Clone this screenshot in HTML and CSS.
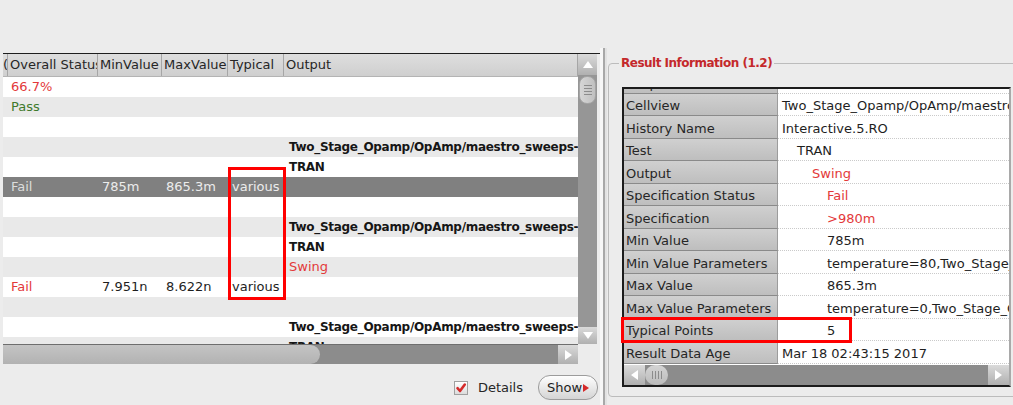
FILE: index.html
```html
<!DOCTYPE html>
<html>
<head>
<meta charset="utf-8">
<link rel="stylesheet" href="styles.css">
</head>
<body>
<div class="app">
  <div class="left">
    <div class="grid">
      <div class="viewport">
        <div class="hdr">
          <div class="c0">(</div>
          <div>Overall Status</div>
          <div>MinValue</div>
          <div>MaxValue</div>
          <div>Typical</div>
          <div>Output</div>
        </div>
        <div class="row w"><div></div><div class="red">66.7%</div><div></div><div></div><div></div><div></div></div>
        <div class="row g"><div></div><div class="green">Pass</div><div></div><div></div><div></div><div></div></div>
        <div class="row w"><div></div><div></div><div></div><div></div><div></div><div></div></div>
        <div class="row g"><div></div><div></div><div></div><div></div><div></div><div class="b">Two_Stage_Opamp/OpAmp/maestro_sweeps-</div></div>
        <div class="row w"><div></div><div></div><div></div><div></div><div></div><div class="b">TRAN</div></div>
        <div class="row sel"><div></div><div class="dim">Fail</div><div>785m</div><div>865.3m</div><div>various</div><div></div></div>
        <div class="row w"><div></div><div></div><div></div><div></div><div></div><div></div></div>
        <div class="row g"><div></div><div></div><div></div><div></div><div></div><div class="b">Two_Stage_Opamp/OpAmp/maestro_sweeps-</div></div>
        <div class="row w"><div></div><div></div><div></div><div></div><div></div><div class="b">TRAN</div></div>
        <div class="row g"><div></div><div></div><div></div><div></div><div></div><div class="red">Swing</div></div>
        <div class="row w"><div></div><div class="red">Fail</div><div>7.951n</div><div>8.622n</div><div>various</div><div></div></div>
        <div class="row g"><div></div><div></div><div></div><div></div><div></div><div></div></div>
        <div class="row w"><div></div><div></div><div></div><div></div><div></div><div class="b">Two_Stage_Opamp/OpAmp/maestro_sweeps-</div></div>
        <div class="row g"><div></div><div></div><div></div><div></div><div></div><div class="b">TRAN</div></div>
      </div>
      <div class="vscroll">
        <div class="sbtn vbtn-up"><svg width="10" height="7" viewBox="0 0 10 7"><polygon points="5,0 10,7 0,7" fill="#ffffff"/></svg></div>
        <div class="vthumb"><span></span><span></span><span></span><span></span></div>
        <div class="vtrack"></div>
        <div class="sbtn vbtn-down"><svg width="10" height="7" viewBox="0 0 10 7"><polygon points="0,0 10,0 5,7" fill="#ffffff"/></svg></div>
      </div>
      <div class="hscroll">
        <div class="hthumb"></div>
        <div class="htrack"></div>
        <div class="sbtn hbtn"><svg width="7" height="10" viewBox="0 0 7 10"><polygon points="0,0 7,5 0,10" fill="#ffffff"/></svg></div>
      </div>
      <div class="corner"></div>
    </div>
    <div class="footer">
      <span class="chk"><svg width="12" height="12" viewBox="0 0 12 12"><path d="M2.5 6.2 L5 9 L9.8 2.5" fill="none" stroke="#d42a2a" stroke-width="2.6" stroke-linecap="round" stroke-linejoin="round"/></svg></span>
      <span class="chk-label">Details</span>
      <button class="show">Show<span class="tri"></span></button>
    </div>
  </div>
  <div class="splitter"></div>
  <div class="right">
    <fieldset class="group">
      <legend>Result Information (1.2)</legend>
      <div class="info">
        <div class="info-view">
          <div class="info-rows">
            <div class="irow"><div class="lbl">Outputs Normal</div><div class="val i0"></div></div>
            <div class="irow"><div class="lbl">Cellview</div><div class="val i0">Two_Stage_Opamp/OpAmp/maestro_sweeps</div></div>
            <div class="irow"><div class="lbl">History Name</div><div class="val i0">Interactive.5.RO</div></div>
            <div class="irow"><div class="lbl">Test</div><div class="val i1">TRAN</div></div>
            <div class="irow"><div class="lbl">Output</div><div class="val i2 red">Swing</div></div>
            <div class="irow"><div class="lbl">Specification Status</div><div class="val i3 red">Fail</div></div>
            <div class="irow"><div class="lbl">Specification</div><div class="val i3 red">&gt;980m</div></div>
            <div class="irow"><div class="lbl">Min Value</div><div class="val i3">785m</div></div>
            <div class="irow"><div class="lbl">Min Value Parameters</div><div class="val i3">temperature=80,Two_Stage_Opamp</div></div>
            <div class="irow"><div class="lbl">Max Value</div><div class="val i3">865.3m</div></div>
            <div class="irow"><div class="lbl">Max Value Parameters</div><div class="val i3">temperature=0,Two_Stage_Opamp</div></div>
            <div class="irow"><div class="lbl">Typical Points</div><div class="val i3">5</div></div>
            <div class="irow"><div class="lbl">Result Data Age</div><div class="val i0">Mar 18 02:43:15 2017</div></div>
          </div>
        </div>
        <div class="hscroll2">
          <div class="sbtn hbtn2"><svg width="7" height="10" viewBox="0 0 7 10"><polygon points="7,0 0,5 7,10" fill="#ffffff"/></svg></div>
          <div class="hthumb2"><span></span><span></span><span></span><span></span></div>
          <div class="htrack2"></div>
          <div class="sbtn hbtn2"><svg width="7" height="10" viewBox="0 0 7 10"><polygon points="0,0 7,5 0,10" fill="#ffffff"/></svg></div>
        </div>
      </div>
    </fieldset>
  </div>
</div>
<div class="mark mark-typ"></div>
<div class="mark mark-pts"></div>
</body>
</html>
```

FILE: styles.css
```css
html, body {
  margin: 0;
  padding: 0;
}
body {
  width: 1013px;
  height: 405px;
  overflow: hidden;
  position: relative;
  background: #ececec;
  font-family: "DejaVu Sans", "Noto Sans", sans-serif;
  font-size: 13px;
  color: #1e1e1e;
}
.app {
  display: flex;
  padding-top: 48px;
  height: 357px;
}

/* ---------- left pane ---------- */
.left {
  width: 597px;
  padding: 5px 0 0 3px;
  display: flex;
  flex-direction: column;
}
.grid {
  display: grid;
  grid-template-columns: 575px 19px;
  grid-template-rows: 290px 20px;
  border-top: 1px solid #1e1e1e;
}
.viewport {
  overflow: hidden;
  background: #ffffff;
}
.hdr, .row {
  display: grid;
  grid-template-columns: 5px 90px 64px 66px 56px 1fr;
}
.hdr {
  height: 22px;
  background: linear-gradient(#dedede, #cfcfcf);
  border-bottom: 1px solid #b4b4b4;
}
.hdr > div {
  line-height: 22px;
  padding-left: 2px;
  white-space: nowrap;
  overflow: hidden;
  border-right: 1px solid #a6a6a6;
  color: #262626;
}
.hdr > .c0 {
  padding-left: 0;
}
.row {
  height: 20px;
}
.row > div {
  line-height: 20px;
  padding-left: 4px;
  white-space: nowrap;
  overflow: hidden;
}
.row > div:first-child {
  padding-left: 0;
}
.row > div:nth-child(2) {
  padding-left: 3px;
}
.row > div:last-child {
  padding-left: 5px;
}
.w { background: #ffffff; }
.g { background: #e9e9e9; }
.sel { background: #808080; color: #ececec; }
.sel .dim { color: #dcdcdc; }
.red { color: #e3393a; }
.green { color: #3f7a2c; }
.b {
  font-weight: bold;
  font-size: 12px;
  letter-spacing: -0.3px;
  color: #161616;
}

.sbtn {
  display: flex;
  align-items: center;
  justify-content: center;
  background: linear-gradient(#dadada, #b0b0b0);
}
.vscroll {
  display: flex;
  flex-direction: column;
  background: #969696;
}
.vbtn-up { height: 21px; }
.vbtn-down { height: 17px; }
.vthumb {
  margin: 1px 1px 0;
  height: 26px;
  border-radius: 8px;
  background: linear-gradient(to right, #d6d6d6, #c0c0c0);
  border: 1px solid #a4a4a4;
  display: flex;
  flex-direction: column;
  align-items: center;
  justify-content: center;
  gap: 2px;
}
.vthumb span {
  display: block;
  width: 8px;
  height: 1px;
  background: #8c8c8c;
}
.vtrack { flex: 1; }

.hscroll {
  display: flex;
  background: #8c8c8c;
  border-top: 1px solid #6e6e6e;
}
.hthumb {
  width: 317px;
  border-radius: 0 10px 10px 0;
  background: linear-gradient(#c4c4c4, #b2b2b2);
}
.htrack { flex: 1; }
.hbtn { width: 20px; }
.corner { background: #ececec; }

.footer {
  flex: 1;
  display: flex;
  align-items: center;
  justify-content: flex-end;
  padding: 6px 2px 0 0;
}
.chk {
  width: 12px;
  height: 12px;
  border: 1px solid #a0a0a0;
  background: linear-gradient(#ffffff, #dcdcdc);
  display: flex;
  margin-right: 10px;
}
.chk-label {
  color: #262626;
}
.show {
  margin-left: 15px;
  width: 60px;
  height: 25px;
  padding: 0 0 0 8px;
  border: 1px solid #9c9c9c;
  border-radius: 12px;
  background: linear-gradient(#fefefe, #d4d4d4);
  font-family: "DejaVu Sans", sans-serif;
  font-size: 13px;
  color: #1e1e1e;
  display: flex;
  align-items: center;
}
.tri {
  display: inline-block;
  width: 0;
  height: 0;
  margin-left: 1px;
  border-left: 6px solid #d52a2a;
  border-top: 4px solid transparent;
  border-bottom: 4px solid transparent;
}

/* ---------- splitter ---------- */
.splitter {
  width: 7px;
  background: linear-gradient(to right, #f7f7f7 0 3px, #a8a8a8 3px 5px, #e2e2e2 5px);
}

/* ---------- right pane ---------- */
.right {
  width: 406px;
  overflow: hidden;
  padding-top: 7.5px;
}
.group {
  margin: 0 0 0 1px;
  padding: 0 0 9px 13px;
  border: 1px solid #bcbcbc;
  border-radius: 4px;
  width: 430px;
  min-width: 0;
}
.group legend {
  margin-left: -3px;
  padding: 0 2px;
  font-weight: bold;
  font-size: 12px;
  line-height: 15px;
  letter-spacing: -0.5px;
  color: #c4292b;
}
.info {
  margin-top: 16.5px;
  width: 385px;
  border: 2px solid #1c1c1c;
  border-right-color: #a9a9a9;
}
.info-view {
  height: 276px;
  overflow: hidden;
  background: #ffffff;
}
.info-rows {
  margin-top: -18px;
}
.irow {
  display: grid;
  grid-template-columns: 154px 1fr;
  height: 22.5px;
}
.lbl {
  box-sizing: border-box;
  padding: 2.5px 0 0 2px;
  line-height: 20px;
  white-space: nowrap;
  overflow: hidden;
  background: linear-gradient(#d0d0d0, #bebebe);
  border-bottom: 1px solid #8a8a8a;
  border-right: 1px solid #9c9c9c;
  color: #262626;
}
.val {
  box-sizing: border-box;
  padding-top: 2.5px;
  line-height: 20px;
  white-space: nowrap;
  overflow: hidden;
  border-bottom: 1px dotted #cacaca;
  color: #1e1e1e;
}
.val.red { color: #e3393a; }
.i0 { padding-left: 4px; }
.i1 { padding-left: 19px; }
.i2 { padding-left: 34px; }
.i3 { padding-left: 49px; }

.hscroll2 {
  display: flex;
  height: 20px;
  background: #8c8c8c;
}
.hbtn2 { width: 21px; }
.hthumb2 {
  width: 23px;
  border-radius: 10px;
  background: linear-gradient(#d4d4d4, #bcbcbc);
  display: flex;
  align-items: center;
  justify-content: center;
  gap: 2px;
}
.hthumb2 span {
  display: block;
  width: 1px;
  height: 8px;
  background: #8c8c8c;
}
.htrack2 { flex: 1; }

/* ---------- annotation boxes ---------- */
.mark {
  position: absolute;
  box-sizing: border-box;
  border: 3px solid #ff0000;
}
.mark-typ {
  left: 228px;
  top: 167px;
  width: 58px;
  height: 133px;
}
.mark-pts {
  left: 621px;
  top: 317px;
  width: 231px;
  height: 26px;
}
```
